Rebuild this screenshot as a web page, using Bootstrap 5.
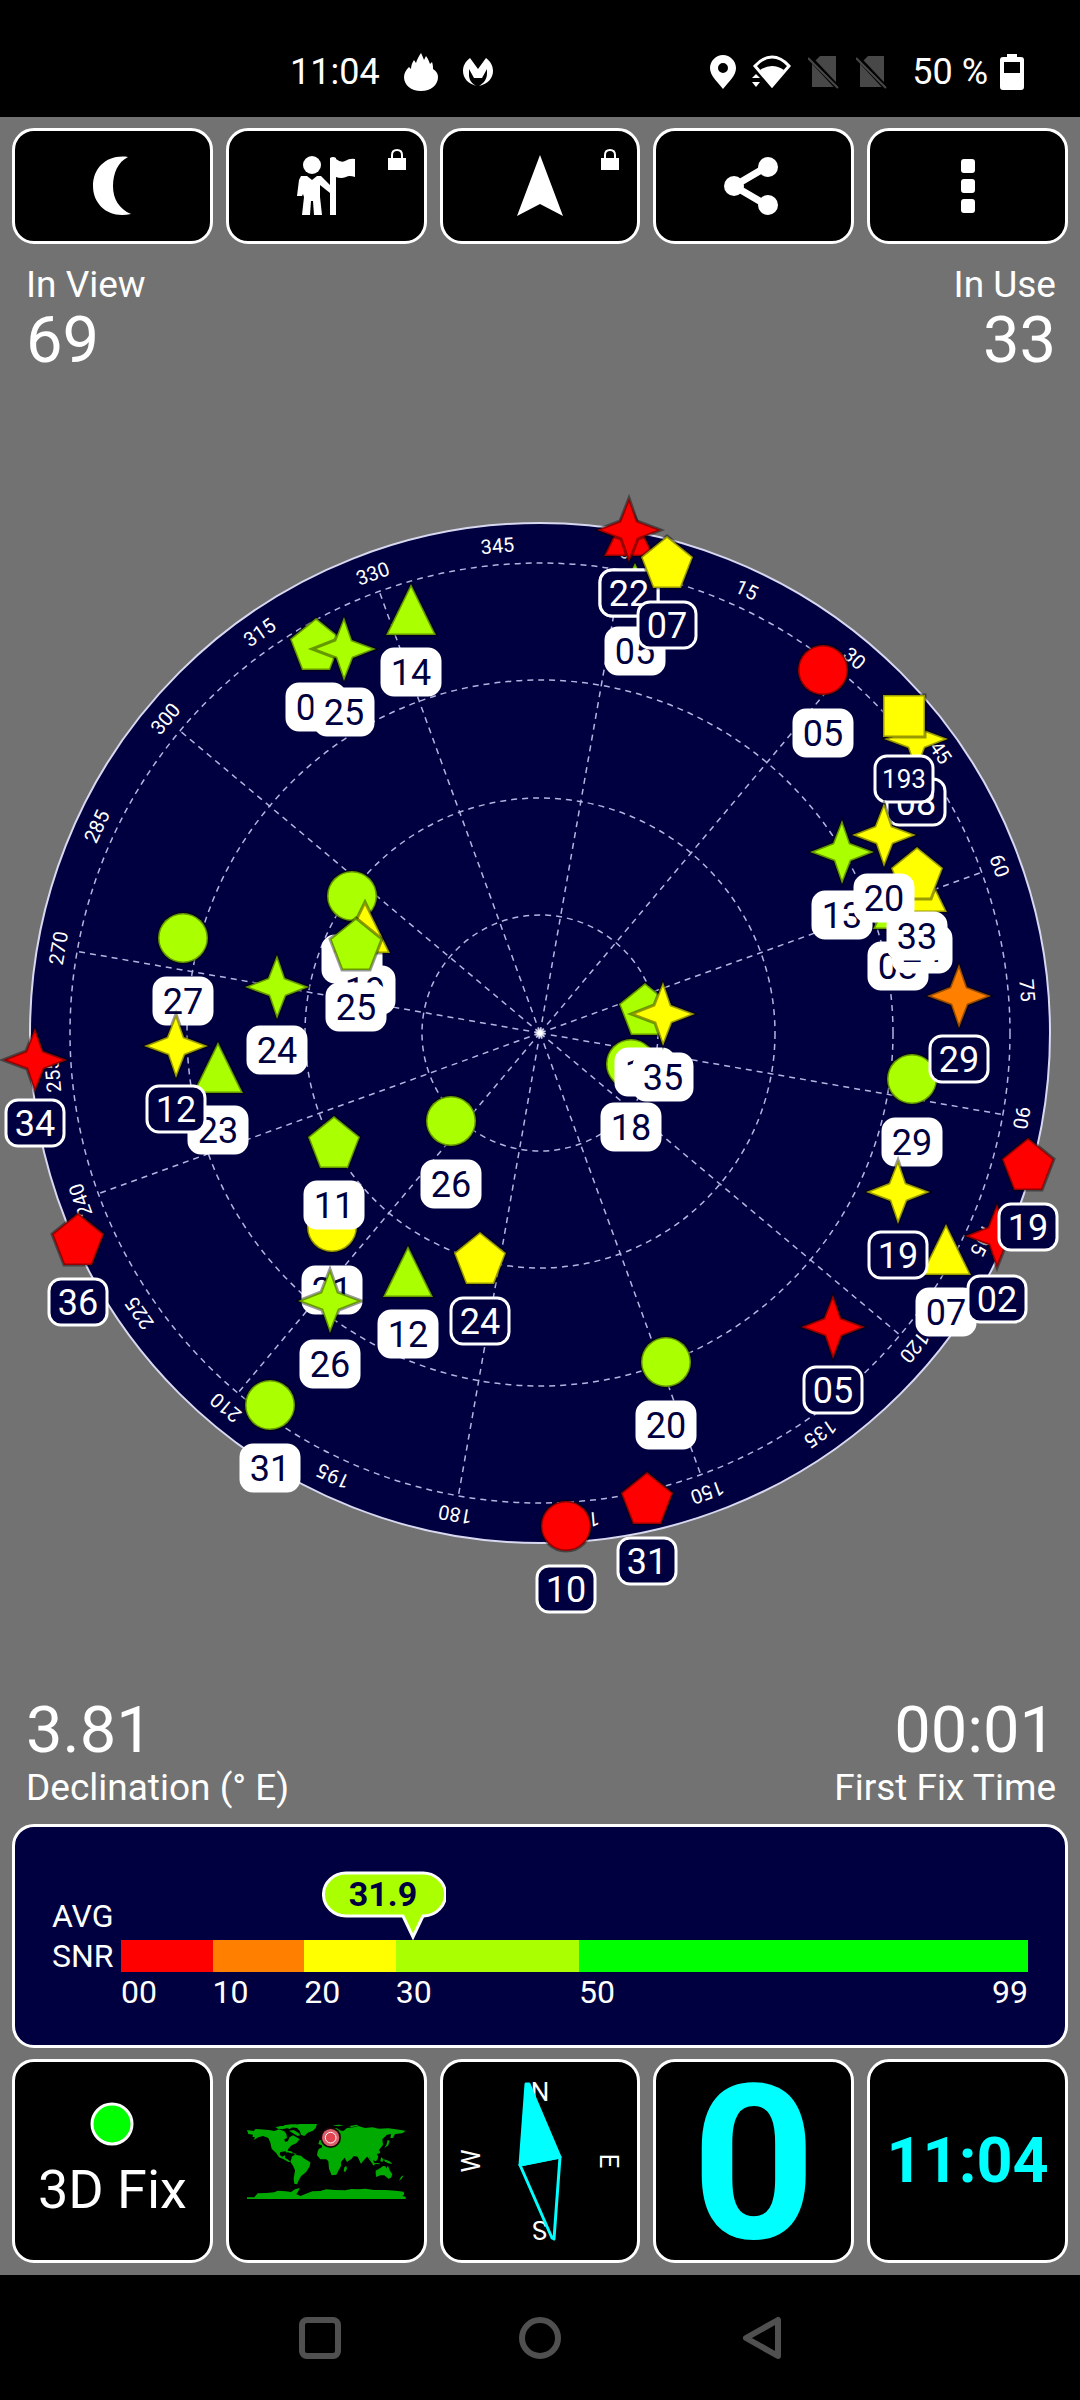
<!DOCTYPE html>
<html lang="en">
<head>
<meta charset="utf-8">
<meta name="viewport" content="width=device-width, initial-scale=1">
<title>GPS status</title>
<link href="https://cdn.jsdelivr.net/npm/bootstrap@5.3.0/dist/css/bootstrap.min.css" rel="stylesheet">
<style>
  body { background: #000; color: #fff; font-family: Roboto, "Noto Sans", sans-serif; }
  svg { display: block; }
  .statusbar { height: 117px; padding: 26px 56px 0; font-size: 36px; line-height: 88px; }
  .status-left { padding-left: 234px; }
  .app-body { background: #727272; padding: 11px 0 12px; }
  .tile-row { display: grid; grid-template-columns: repeat(5, minmax(0, 1fr)); gap: 13px; padding: 0 12px; }
  .tile { background: #000; border: 3px solid #fff; border-radius: 22px; color: #fff; padding: 0; position: relative; }
  .tile-short { height: 116px; }
  .tile-tall { height: 204px; }
  .lock-mark { position: absolute; top: 18px; right: 17px; }
  .stats { padding: 0 24px 0 26px; }
  .stats-head { padding-top: 19px; }
  .stat-label { font-size: 37px; line-height: 44px; }
  .stat-value { font-size: 65px; line-height: 66px; }
  .stats-foot .stat-label { line-height: 50px; }
  .sky { width: 100%; height: auto; }
  .snr-card { background: #000040; border: 3px solid #fff; border-radius: 22px; margin: 11px 12px; padding: 69px 37px 33px; font-size: 32px; line-height: 40px; }
  .snr-name { width: 69px; }
  .snr-scale { padding-top: 44px; }
  .snr-bar { height: 32px; }
  .snr-marker { position: absolute; bottom: 100%; margin-left: -91px; }
  .fix-text { font-size: 54px; line-height: 60px; margin-top: 14px; }
  .cyan { color: #0ff; font-weight: 700; }
  .speed { font-size: 216px; line-height: 190px; padding-top: 8px; }
  .clock { font-size: 63px; line-height: 70px; }
  .sysnav { height: 126px; gap: 174px; }
  .sysnav button { background: none; border: 0; padding: 0; }
</style>
<script src="https://cdn.jsdelivr.net/npm/bootstrap@5.3.0/dist/js/bootstrap.bundle.min.js"></script>
</head>
<body>

<header class="statusbar d-flex justify-content-between">
  <div class="status-left d-flex align-items-center">
    <span>11:04</span>
    <svg class="ms-4" width="35" height="38" viewBox="0 0 35 38" fill="#fff"><path d="M17 0c1 2 2 4 3 7l2-4c2 3 3 5 4 8l2-2c1 3 1 5 1 7 4 3 5 5 5 8 0 8-7 14-17 14S0 32 0 24c0-4 2-7 5-10l2 2c0-3 1-6 3-9l2 3c1-4 3-7 5-10z"/></svg>
    <svg class="ms-4" width="30" height="28" viewBox="0 0 30 28" fill="#fff"><path d="M7 0l8 11 8-11c5 4 7 8 7 13 0 7-5 13-14 15 5-3 8-7 8-13V11l-5 9h-8l-5-9v6c0 5 3 9 8 11C5 26 0 20 0 13 0 8 2 4 7 0z"/></svg>
  </div>
  <div class="d-flex align-items-center">
    <svg width="26" height="34" viewBox="0 0 26 34" fill="#fff"><path fill-rule="evenodd" d="M13 0C6 0 0 6 0 13c0 8 7 13 13 21 6-8 13-13 13-21 0-7-6-13-13-13zm0 8a5 5 0 1 1 0 10 5 5 0 0 1 0-10z"/></svg>
    <svg class="ms-3" width="40" height="34" viewBox="0 0 40 34"><path d="M3 11L20 31 37 11Q29 2 20 2T3 11z" fill="none" stroke="#fff" stroke-width="3"/><path d="M8 15q12-8 24 0L20 32z" fill="#fff"/><path d="M0 23l4-4 4 4zM0 27h8l-4 5z" fill="#fff"/></svg>
    <svg class="ms-3" width="32" height="34" viewBox="0 0 32 34"><path d="M12 1h16v31H4V9z" fill="#484848"/><path d="M1 2l30 32" stroke="#000" stroke-width="5"/><path d="M0 3l30 30" stroke="#484848" stroke-width="2"/></svg>
    <svg class="ms-3" width="32" height="34" viewBox="0 0 32 34"><path d="M12 1h16v31H4V9z" fill="#484848"/><path d="M1 2l30 32" stroke="#000" stroke-width="5"/><path d="M0 3l30 30" stroke="#484848" stroke-width="2"/></svg>
    <span class="ms-4 me-1">50 %</span>
    <svg class="ms-2" width="24" height="36" viewBox="0 0 24 36"><path fill="#fff" fill-rule="evenodd" d="M7 0h10v3h4q3 0 3 3v27q0 3-3 3H3q-3 0-3-3V6q0-3 3-3h4zM4 8v11h16V8z"/></svg>
  </div>
</header>

<main class="app-body">
  <div class="tile-row">
    <button type="button" class="tile tile-short d-flex align-items-center justify-content-center" aria-label="Night mode">
      <svg width="38" height="60" viewBox="0 0 38 60" fill="#fff"><path d="M35 1C15-2 0 11 0 30s16 33 38 28C26 53 20 43 20 30S25 6 35 1z"/></svg>
    </button>
    <button type="button" class="tile tile-short d-flex align-items-center justify-content-center" aria-label="Guide">
      <svg width="58" height="60" viewBox="0 0 58 60" fill="#fff"><circle cx="15" cy="9" r="9"/><path d="M4 20h6l5 4 5-4h4l9 9v8l-10-8v12l2 18h-8l-1-14h-2l-1 14H5l2-18-1-3-1 2H0l2-16zM33 2q3-2 6 0v1q5 4 9 2 5-3 10-2v18q-6-2-9 0-5 2-10 0v38h-6z"/></svg>
      <svg class="lock-mark" width="20" height="22" viewBox="0 0 20 22"><rect x="1" y="9" width="18" height="12" fill="#fff"/><path d="M5 10V6q0-5 5-5t5 5v4" fill="none" stroke="#fff" stroke-width="2"/></svg>
    </button>
    <button type="button" class="tile tile-short d-flex align-items-center justify-content-center" aria-label="Navigate">
      <svg width="46" height="62" viewBox="0 0 46 62" fill="#fff"><path d="M23 0l23 61-23-12L0 61z"/></svg>
      <svg class="lock-mark" width="20" height="22" viewBox="0 0 20 22"><rect x="1" y="9" width="18" height="12" fill="#fff"/><path d="M5 10V6q0-5 5-5t5 5v4" fill="none" stroke="#fff" stroke-width="2"/></svg>
    </button>
    <button type="button" class="tile tile-short d-flex align-items-center justify-content-center" aria-label="Share">
      <svg width="60" height="58" viewBox="0 0 60 58" fill="#fff"><path d="M44 9L10 29l34 20" fill="none" stroke="#fff" stroke-width="7"/><circle cx="44" cy="10" r="10"/><circle cx="10" cy="29" r="10"/><circle cx="44" cy="48" r="10"/></svg>
    </button>
    <button type="button" class="tile tile-short d-flex align-items-center justify-content-center" aria-label="More">
      <svg width="14" height="54" viewBox="0 0 14 54" fill="#fff"><rect width="14" height="14" rx="3"/><rect y="20" width="14" height="14" rx="3"/><rect y="40" width="14" height="14" rx="3"/></svg>
    </button>
  </div>

  <div class="stats stats-head d-flex justify-content-between">
    <div>
      <div class="stat-label">In View</div>
      <div class="stat-value">69</div>
    </div>
    <div class="text-end">
      <div class="stat-label">In Use</div>
      <div class="stat-value">33</div>
    </div>
  </div>

  <svg class="sky" viewBox="0 373 1080 1324" role="img" aria-label="Satellite sky plot">
    <defs>
      <radialGradient id="zenith"><stop offset="0.3" stop-color="#fff"/><stop offset="1" stop-color="#fff" stop-opacity="0"/></radialGradient>
    </defs>
    <circle cx="540" cy="1033" r="510" fill="#000040" stroke="#d8d8f0" stroke-width="2"/>
    <g id="grid" fill="none" stroke="#b4b4e0" stroke-width="1.500" stroke-dasharray="6 5"></g>
    <g id="bearings" fill="#fff" font-size="20" text-anchor="middle"></g>
    <circle cx="540" cy="1033" r="6" fill="url(#zenith)"/>
    <g id="satellites" font-size="36" text-anchor="middle"></g>
  </svg>

  <div class="stats stats-foot d-flex justify-content-between">
    <div>
      <div class="stat-value">3.81</div>
      <div class="stat-label">Declination (° E)</div>
    </div>
    <div class="text-end">
      <div class="stat-value">00:01</div>
      <div class="stat-label">First Fix Time</div>
    </div>
  </div>

  <section class="snr-card d-flex">
    <div class="snr-name">AVG<br>SNR</div>
    <div class="snr-scale flex-grow-1">
      <div class="snr-bar d-flex position-relative">
        <div style="width:10.1%;background:#f00"></div>
        <div style="width:10.1%;background:#ff8000"></div>
        <div style="width:10.1%;background:#ff0"></div>
        <div style="width:20.2%;background:#af0"></div>
        <div style="width:49.5%;background:#0f0"></div>
        <svg class="snr-marker" style="left:32.2%" width="124" height="69" viewBox="0 0 124 69">
          <path d="M24 2h76a22 21 0 0 1 2 43h-1L91 66 81 45H24a22 21 0 0 1 0-43z" fill="#af0" stroke="#fff" stroke-width="3"/>
          <text x="61" y="35" text-anchor="middle" font-size="34" font-weight="700" fill="#000040">31.9</text>
        </svg>
      </div>
      <div class="d-flex">
        <div style="width:10.1%">00</div>
        <div style="width:10.1%">10</div>
        <div style="width:10.1%">20</div>
        <div style="width:20.2%">30</div>
        <div class="d-flex justify-content-between" style="width:49.5%"><span>50</span><span>99</span></div>
      </div>
    </div>
  </section>

  <div class="tile-row">
    <button type="button" class="tile tile-tall d-flex flex-column align-items-center justify-content-center">
      <svg width="44" height="44" viewBox="0 0 44 44"><circle cx="22" cy="22" r="20" fill="#0f0" stroke="#fff" stroke-width="3"/></svg>
      <span class="fix-text">3D Fix</span>
    </button>
    <button type="button" class="tile tile-tall d-flex align-items-center justify-content-center" aria-label="World map">
      <svg width="166" height="90" viewBox="0 0 498 270">
        <g fill="#0a0">
          <path d="M12 42l20 3 6-6 40 3 16 3 14-5 16 6 6 8 2 12-8 4 2 8 8-2 6-12 10-6 14 8 6 4-10 12-14 6-10 10-4 14-4-6-16 2-2 8 8 6 8-4 0 8 8 4 8 8-6 0-14-8-14-6-8-12-14-14-4-18-6-14-16-6-14 4-14 8 4-8-8-2 2-6-14-2z"/>
          <path d="M98 34l14-4 16 0 6 6-16 4-14-2zM122 28l22-3 18 0-12 8-10 6-12-4zM138 44l14-2 14 8 6 8-8 2-14-8z"/>
          <path d="M150 28l20-4h52l-4 12-8 8-16 6-10 10-10-4-4-12-8-8-16-2z"/>
          <path d="M146 122l10-6 18 3 8 8 20 12-2 12-10 16-16 14-6 10-6 14-8-2-2-14 4-26-6-14-8-12 4-10z"/>
          <path d="M132 104l12 2 8 6-8 0-12-4zM152 112l8 1v3l-8-1z"/>
          <path d="M228 98l14-6 18-2 10 4 18 2 10 18 10 2-2 8-12 14 0 12-8 14-6 12-14 2-8-20-2-22-6-6-18 0-10-12 2-12z"/>
          <path d="M304 154l6-4 2 8-5 10-5-2zM226 84l4-12 12 0 2 10-8 6zM234 56l8-6 2 10-6 6z"/>
          <path d="M238 70l14-8 10-18 18-8 14 8 8 0 10-8 20-2 14-4 20 6 22-2 20 4 28-1 22 3 30 4-10 8-22 2-6 12-8 0 2-12-12 2-14 14 2 16-12 16 4 8-10 4 2 14-6 8-8-4 6 16-6 0-10-24-8-2-14 16-4 6-10-22-12-2-6 8-14 10-10-18-12-2-12-8-16 4-12-6-14 2z"/>
          <path d="M376 120l6 8 8 10-4 2-12-16zM394 124l8-8 4 6-6 12-8-2zM392 140l18 2 0 3-18-2zM414 124l8 6-4 8-6-2zM424 130l16 6 8 8-12-2-12-6zM434 72l6 2-4 14-12 8 6-10zM404 98l6 8-2 8-6-6z"/>
          <path d="M398 164l14-8 8-6 8 1 2 6 5-8 5 14 8 12-4 10-8 3-12-10-12 0-12 5-2-10zM432 182h5l-2 5zM474 182l8-4-6 10-8 6z"/>
          <path d="M12 244h22l10-12 26-1 24-2 10-5 24 2 16 2 12-8 14-4-4 10-6 8 12 6 36-14 24-1 18-5 26 2 30 1 20-4 20 1 22-2 24 4 36 0 30 2 24 3 2 8-6 5 10 2v7H12zM268 28l20-2 14 2-16 3zM320 30l22-4 4 3-22 5z"/>
        </g>
        <circle cx="263" cy="65" r="31" fill="#1a0508"/>
        <circle cx="263" cy="65" r="26" fill="#d9606c"/>
        <circle cx="263" cy="65" r="16" fill="#e04450" stroke="#fff" stroke-width="3"/>
      </svg>
    </button>
    <button type="button" class="tile tile-tall d-flex align-items-center justify-content-center" aria-label="Compass">
      <svg width="180" height="180" viewBox="-90 -90 180 180">
        <g fill="#fff" font-size="26" text-anchor="middle">
          <text y="-60">N</text>
          <text y="-60" transform="rotate(90)">E</text>
          <text y="-60" transform="rotate(180)">S</text>
          <text y="-60" transform="rotate(-90)">W</text>
        </g>
        <g stroke="#0ff" stroke-width="3" stroke-linejoin="round" fill="none">
          <path d="M-20 4L-14-77-11-77 20-4z" fill="#0ff"/>
          <path d="M-20 4L12 77 14 78 20-4z"/>
        </g>
      </svg>
    </button>
    <button type="button" class="tile tile-tall cyan speed d-flex align-items-center justify-content-center">0</button>
    <button type="button" class="tile tile-tall cyan clock d-flex align-items-center justify-content-center">11:04</button>
  </div>
</main>

<nav class="sysnav d-flex align-items-center justify-content-center">
  <button type="button" aria-label="Recent apps"><svg width="46" height="46" viewBox="0 0 46 46" fill="none" stroke="#505050" stroke-width="6"><rect x="5" y="5" width="36" height="36" rx="5"/></svg></button>
  <button type="button" aria-label="Home"><svg width="46" height="46" viewBox="0 0 46 46" fill="none" stroke="#505050" stroke-width="6"><circle cx="23" cy="23" r="18"/></svg></button>
  <button type="button" aria-label="Back"><svg width="46" height="46" viewBox="0 0 46 46" fill="none" stroke="#505050" stroke-width="6" stroke-linejoin="round"><path d="M9 23L41 5v36z"/></svg></button>
</nav>

<script>
  const NS = 'http://www.w3.org/2000/svg';
  const CX = 540, CY = 1033, HEADING = 10;
  const make = (parent, name, attrs, text) => {
    const el = document.createElementNS(NS, name);
    for (const k in attrs) el.setAttribute(k, attrs[k]);
    if (text) el.textContent = text;
    parent.appendChild(el);
    return el;
  };

  // Elevation rings, spokes every 30 degrees and bearings every 15
  const grid = document.getElementById('grid');
  const bearings = document.getElementById('bearings');
  [118, 235, 353, 470].forEach(r => make(grid, 'circle', { cx: CX, cy: CY, r }));
  for (let a = 0; a < 360; a += 30)
    make(grid, 'path', { d: `M${CX} ${CY}v-470`, transform: `rotate(${a + HEADING} ${CX} ${CY})` });
  for (let a = 0; a < 360; a += 15)
    make(bearings, 'text', { x: CX, y: CY - 482, transform: `rotate(${a + HEADING} ${CX} ${CY})` }, String(a));

  const shapes = {
    circle: 'M-25 0a25 25 0 1 1 50 0 25 25 0 1 1-50 0z',
    star: 'M0-32L8-9 32 0 9 9 0 32-8 9-32 0-9-9z',
    triangle: 'M0-25L25 26H-25z',
    pentagon: 'M0-26L26-5 14 26H-14L-26-5z',
    square: 'M-21-21h42v42h-42z'
  };
  const G = '#aaff00', Y = '#ffff00', R = '#ff0000', O = '#ff8000';

  // [label x, label y, shape, signal colour, id, in use], painted in this order
  const satellites = [
    [183, 1001, 'circle', G, '27', 1],
    [352, 959, 'circle', G, '16', 1],
    [451, 1184, 'circle', G, '26', 1],
    [332, 1290, 'circle', Y, '21', 1],
    [270, 1468, 'circle', G, '31', 1],
    [823, 733, 'circle', R, '05', 1],
    [912, 1142, 'circle', G, '29', 1],
    [666, 1425, 'circle', G, '20', 1],
    [566, 1589, 'circle', R, '10', 0],
    [631, 1127, 'circle', G, '18', 1],
    [365, 990, 'triangle', Y, '19', 1],
    [218, 1130, 'triangle', G, '23', 1],
    [408, 1334, 'triangle', G, '12', 1],
    [411, 672, 'triangle', G, '14', 1],
    [635, 651, 'triangle', G, '05', 1],
    [629, 593, 'triangle', R, '22', 0],
    [898, 966, 'triangle', G, '03', 1],
    [922, 949, 'triangle', Y, '24', 1],
    [946, 1312, 'triangle', Y, '07', 1],
    [356, 1007, 'pentagon', G, '25', 1],
    [334, 1205, 'pentagon', G, '11', 1],
    [480, 1321, 'pentagon', Y, '24', 0],
    [78, 1302, 'pentagon', R, '36', 0],
    [316, 707, 'pentagon', G, '03', 1],
    [917, 936, 'pentagon', Y, '33', 1],
    [647, 1561, 'pentagon', R, '31', 0],
    [645, 1072, 'pentagon', G, '14', 1],
    [997, 1299, 'star', R, '02', 0],
    [1028, 1227, 'pentagon', R, '19', 0],
    [916, 802, 'star', Y, '08', 0],
    [904, 779, 'square', Y, '193', 0],
    [277, 1050, 'star', G, '24', 1],
    [176, 1109, 'star', Y, '12', 0],
    [35, 1123, 'star', R, '34', 0],
    [330, 1364, 'star', G, '26', 1],
    [344, 712, 'star', G, '25', 1],
    [629, 593, 'star', R, '22', 0],
    [667, 625, 'pentagon', Y, '07', 0],
    [842, 915, 'star', G, '13', 1],
    [884, 898, 'star', Y, '20', 1],
    [959, 1059, 'star', O, '29', 0],
    [898, 1255, 'star', Y, '19', 0],
    [833, 1390, 'star', R, '05', 0],
    [663, 1077, 'star', Y, '35', 1]
  ];
  const layer = document.getElementById('satellites');
  for (const [x, y, shape, colour, id, used] of satellites) {
    const g = make(layer, 'g', { transform: `translate(${x} ${y})` });
    make(g, 'path', { d: shapes[shape], transform: 'translate(0 -63)', fill: colour, stroke: '#000', 'stroke-opacity': 0.4, 'stroke-width': 3 });
    make(g, 'rect', { x: -29, y: -23, width: 58, height: 46, rx: 12, fill: used ? '#fff' : '#000040', stroke: '#fff', 'stroke-width': 3 });
    const small = id.length > 2;
    make(g, 'text', { y: small ? 9 : 13, 'font-size': small ? 26 : 36, fill: used ? '#000040' : '#fff' }, id);
  }
</script>
</body>
</html>
